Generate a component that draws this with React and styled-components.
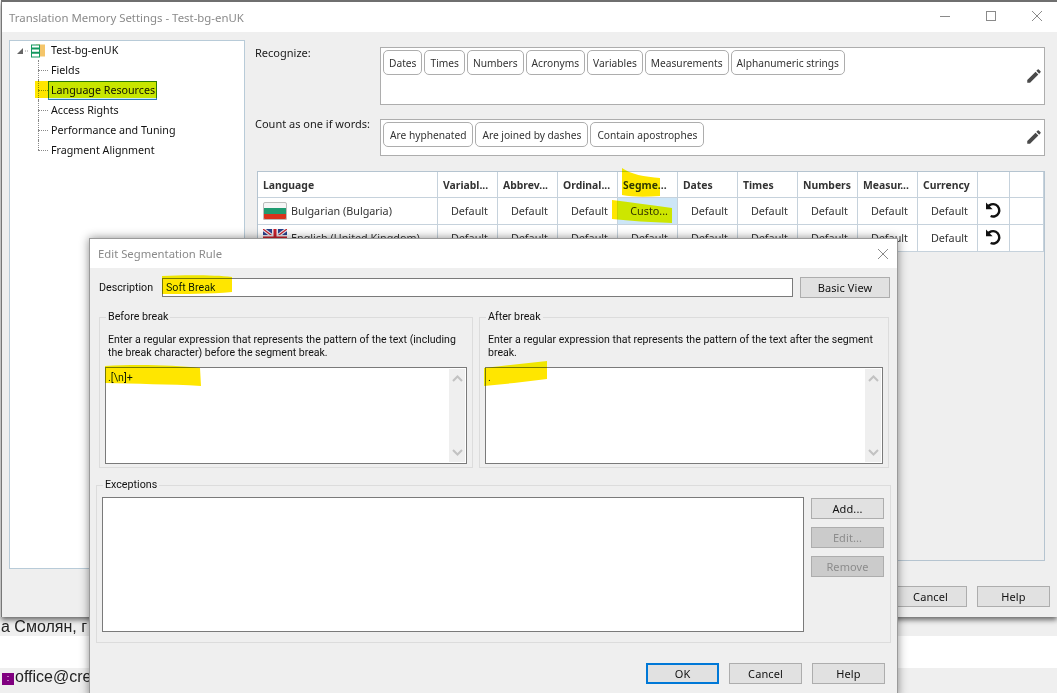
import React from 'react';
import styled, { createGlobalStyle } from 'styled-components';
import { MdEdit } from 'react-icons/md';

const GlobalStyle = createGlobalStyle`
  html, body { margin: 0; padding: 0; background: #fff; }
  body { font-family: "Noto Sans", "Liberation Sans", sans-serif; font-size: 11px; color: #1a1a1a; }
`;

const Page = styled.div`
  position: relative;
  width: 1057px;
  height: 693px;
  overflow: hidden;
  background: #fff;
`;

const Window = styled.div`
  height: 617px;
  box-sizing: border-box;
  margin-left: 1px;
  border-top: 2px solid #6f6f6f;
  border-left: 1px solid #777;
  background: #efefef;
  box-shadow: 0 3px 5px rgba(0, 0, 0, 0.55);
  display: flex;
  flex-direction: column;
  position: relative;
`;

const TitleBar = styled.div`
  height: ${(p) => p.$h}px;
  flex: none;
  background: #fff;
  display: flex;
  align-items: center;
  justify-content: space-between;
  padding-left: ${(p) => p.$pad}px;
  color: #8a8a8a;
  font-family: "Noto Sans", sans-serif;
  font-size: ${(p) => p.$size}px;
`;

const WinControls = styled.div`
  display: flex;
  align-items: center;
  color: #8a8a8a;
`;

const WinControl = styled.svg`
  display: block;
  width: 46px;
  height: 12px;
`;

const WindowBody = styled.div`
  flex: 1;
  display: flex;
  padding: 8px 0 0 7px;
  min-height: 0;
`;

const TreePanel = styled.div`
  width: 234px;
  height: 527px;
  flex: none;
  background: #fff;
  border: 1px solid #b8cbd8;
  position: relative;
`;

const TreeRoot = styled.div`
  height: 19px;
  display: flex;
  align-items: center;
  padding-left: 4px;
  gap: 1px;
`;

const TreeRow = styled.div`
  height: 20px;
  display: flex;
  align-items: center;
  padding-left: 28px;
  position: relative;
  &::before {
    content: '';
    width: 10px;
    border-top: 1px dotted #888;
  }
  &::after {
    content: '';
    position: absolute;
    left: 28px;
    top: 0;
    height: ${(p) => (p.$last ? 10 : 20)}px;
    border-left: 1px dotted #888;
  }
`;

const TreeLabel = styled.span`
  height: 17px;
  line-height: 16px;
  padding: 0 1px 0 2px;
  border: 1px solid ${(p) => (p.$selected ? '#2c7bb5' : 'transparent')};
  background: ${(p) => (p.$selected ? '#c8e8ff' : 'transparent')};
  color: #111;
  font-size: 10.7px;
  white-space: nowrap;
`;

const Settings = styled.div`
  flex: 1;
  min-width: 0;
  padding: 7px 12px 0 10px;
  display: flex;
  flex-direction: column;
`;

const FieldRow = styled.div`
  display: flex;
  height: ${(p) => p.$h}px;
  margin-bottom: ${(p) => p.$gap}px;
`;

const FieldLabel = styled.div`
  width: 125px;
  flex: none;
  line-height: ${(p) => p.$lh}px;
`;

const TagBox = styled.div`
  flex: 1;
  background: #fff;
  border: 1px solid #adadad;
  padding: 2px;
  display: flex;
  align-items: flex-start;
  gap: 2px;
  position: relative;
`;

const Tag = styled.span`
  height: 25px;
  box-sizing: border-box;
  display: flex;
  align-items: center;
  padding: 0 ${(p) => p.$pad}px;
  border: 1px solid #adadad;
  border-radius: 5px;
  background: #fff;
  font-size: 10.2px;
  color: #333;
  white-space: nowrap;
`;

const EditIcon = styled(MdEdit)`
  position: absolute;
  right: 1px;
  bottom: ${(p) => p.$bottom}px;
  width: 18px;
  height: 18px;
  color: #4a4a4a;
`;

const GridFrame = styled.div`
  margin-left: 2px;
  height: 390px;
  box-sizing: border-box;
  border: 1px solid #b5c4d0;
`;

const Grid = styled.div`
  background: #fff;
  display: grid;
  grid-template-columns: 180px repeat(9, 60px) 32px 1fr;
  grid-template-rows: 26px;
  grid-auto-rows: 27px;
  font-size: 10.8px;
`;

const HeaderCell = styled.div`
  box-sizing: border-box;
  display: flex;
  align-items: center;
  padding-left: 5px;
  font-weight: 700;
  font-size: 10.4px;
  color: #333;
  white-space: nowrap;
  overflow: hidden;
  border-right: 1px solid #c6d2dc;
  border-bottom: 1px solid #c6d2dc;
`;

const Cell = styled.div`
  box-sizing: border-box;
  display: flex;
  align-items: center;
  justify-content: flex-end;
  padding: 0 9px 2px 0;
  color: #333;
  border-right: 1px solid #c6d2dc;
  border-bottom: 1px solid #c6d2dc;
  background: ${(p) => (p.$active ? '#cde6f7' : '#fff')};
`;

const LanguageCell = styled(Cell)`
  justify-content: flex-start;
  gap: 4px;
  padding: 0 0 1px 5px;
`;

const IconCell = styled(Cell)`
  justify-content: center;
  padding: 0 2px 2px 0;
`;

const WindowFooter = styled.div`
  position: absolute;
  right: 7px;
  bottom: 10px;
  display: flex;
  gap: 10px;
`;

const Button = styled.button`
  width: ${(p) => p.$w || 73}px;
  height: 21px;
  box-sizing: border-box;
  padding: 0;
  font-family: "Noto Sans", sans-serif;
  font-size: 11px;
  letter-spacing: 0.1px;
  color: ${(p) => (p.disabled ? '#8c8c8c' : '#111')};
  background: ${(p) => (p.disabled ? '#cbcbcb' : '#e1e1e1')};
  border: ${(p) => (p.$primary ? '2px solid #0078d7' : '1px solid #adadad')};
`;

const PageStrip = styled.div`
  height: ${(p) => p.$h}px;
  padding: ${(p) => p.$top}px 0 0 1px;
  box-sizing: border-box;
  background: ${(p) => p.$bg};
  font-family: "Liberation Sans", Arial, sans-serif;
  font-size: 16px;
  line-height: 18px;
  color: #222;
  white-space: nowrap;
`;

const PurpleMark = styled.span`
  display: inline-block;
  width: 12px;
  height: 12px;
  margin: 0 1px 0 1px;
  vertical-align: 1px;
  background: #800080;
  color: #fff;
  font-size: 9px;
  line-height: 11px;
  text-align: center;
`;

const Dialog = styled.div`
  position: absolute;
  left: 89px;
  top: 238px;
  width: 809px;
  height: 460px;
  box-sizing: border-box;
  background: #efefef;
  border: 1px solid #9a9a9a;
  box-shadow: 0 0 9px rgba(0, 0, 0, 0.45);
  display: flex;
  flex-direction: column;
  font-family: Roboto, "Noto Sans", sans-serif;
  font-size: 10.7px;
  color: #111;
`;

const DialogBody = styled.div`
  padding: 9px 7px 0 6px;
  display: flex;
  flex-direction: column;
`;

const DescriptionRow = styled.div`
  display: flex;
  align-items: center;
  margin-left: 3px;
  height: 20px;
`;

const DescriptionLabel = styled.span`
  width: 63px;
  flex: none;
`;

const DescriptionInput = styled.div`
  width: 631px;
  height: 19px;
  box-sizing: border-box;
  flex: none;
  padding-left: 3px;
  line-height: 17px;
  background: #fff;
  border: 1px solid #7a7a7a;
`;

const BasicButton = styled(Button)`
  width: 91px;
  margin-left: 7px;
`;

const BreakColumns = styled.div`
  display: flex;
  gap: 6px;
  margin: 13px 0 0 3px;
`;

const GroupBox = styled.fieldset`
  box-sizing: border-box;
  margin: 0;
  min-width: 0;
  width: ${(p) => p.$w}px;
  height: ${(p) => p.$h}px;
  padding: 0 ${(p) => p.$inset}px;
  border: 1px solid #dcdcdc;
  legend {
    margin-left: 1px;
    padding: 0 2px;
    line-height: 14px;
  }
`;

const Hint = styled.p`
  margin: 9px 0 8px 3px;
  height: 26px;
  line-height: 13px;
  font-size: 10.55px;
`;

const PatternBox = styled.div`
  height: 97px;
  box-sizing: border-box;
  background: #fff;
  border: 1px solid #7a7a7a;
  padding: 3px 2px;
  position: relative;
`;

const ScrollTrack = styled.div`
  position: absolute;
  top: 1px;
  right: 1px;
  bottom: 1px;
  width: 16px;
  background: #efefef;
  display: flex;
  flex-direction: column;
  justify-content: space-between;
  align-items: center;
  padding: 6px 0;
  box-sizing: border-box;
`;

const Chevron = styled.svg`
  width: 11px;
  height: 7px;
  fill: none;
  stroke: #c2c2c2;
  stroke-width: 2;
`;

const ExceptionsBox = styled(GroupBox)`
  margin-top: 10px;
  legend { margin-left: 1px; }
`;

const ExceptionsRow = styled.div`
  display: flex;
  gap: 7px;
  margin-top: 5px;
`;

const ExceptionsList = styled.div`
  width: 702px;
  height: 135px;
  box-sizing: border-box;
  flex: none;
  background: #fff;
  border: 1px solid #7a7a7a;
`;

const SideButtons = styled.div`
  display: flex;
  flex-direction: column;
  gap: 8px;
  padding-top: 1px;
`;

const DialogFooter = styled.div`
  display: flex;
  justify-content: flex-end;
  gap: 10px;
  margin: 20px 5px 0 0;
`;

const Marks = styled.svg`
  position: absolute;
  left: 0;
  top: 0;
  width: 1057px;
  height: 693px;
  pointer-events: none;
  mix-blend-mode: darken;
  fill: #ffe600;
`;

const BulgarianFlag = () => (
  <svg width="24" height="18" viewBox="0 0 24 18">
    <rect x="0.5" y="0.5" width="23" height="6" fill="#f6f6f6" />
    <rect x="0.5" y="6" width="23" height="6" fill="#1f9b70" />
    <rect x="0.5" y="12" width="23" height="5.5" fill="#d8321c" />
    <rect x="0.5" y="0.5" width="23" height="17" rx="1.5" fill="none" stroke="#bdbdbd" />
  </svg>
);

const UkFlag = () => (
  <svg width="24" height="18" viewBox="0 0 24 18">
    <rect width="24" height="18" rx="1" fill="#27408b" />
    <path d="M0 0L24 18M24 0L0 18" stroke="#e8e8f0" strokeWidth="3.4" />
    <path d="M0 0L24 18M24 0L0 18" stroke="#c8202c" strokeWidth="1.2" />
    <path d="M12 0V18M0 9H24" stroke="#e8e8f0" strokeWidth="6" />
    <path d="M12 0V18M0 9H24" stroke="#c8202c" strokeWidth="3" />
  </svg>
);

const ResetIcon = () => (
  <svg width="18" height="18" viewBox="0 0 18 18" fill="none">
    <path d="M3.6 6.4A6.2 6.2 0 1 1 6.6 15" stroke="#111" strokeWidth="2.4" />
    <path d="M2 1.6V8.2H8.6Z" fill="#111" />
  </svg>
);

const MemoryIcon = () => (
  <svg width="16" height="14" viewBox="0 0 16 14">
    <rect x="5" y="0.5" width="9" height="12" fill="#f4c56a" />
    <rect x="0.5" y="1" width="8" height="12" fill="#fff" stroke="#14985f" />
    <path d="M1 4.5H8M1 8.8H8" stroke="#14985f" strokeWidth="2" />
  </svg>
);

const ScrollBar = () => (
  <ScrollTrack>
    <Chevron viewBox="0 0 11 7"><path d="M1 6L5.5 1.5L10 6" /></Chevron>
    <Chevron viewBox="0 0 11 7"><path d="M1 1L5.5 5.5L10 1" /></Chevron>
  </ScrollTrack>
);

const treeItems = ['Fields', 'Language Resources', 'Access Rights', 'Performance and Tuning', 'Fragment Alignment'];
const recognizeTags = ['Dates', 'Times', 'Numbers', 'Acronyms', 'Variables', 'Measurements', 'Alphanumeric strings'];
const wordTags = ['Are hyphenated', 'Are joined by dashes', 'Contain apostrophes'];
const columns = ['Variabl...', 'Abbrev...', 'Ordinal...', 'Segme...', 'Dates', 'Times', 'Numbers', 'Measur...', 'Currency'];
const languages = [
  { name: 'Bulgarian (Bulgaria)', Flag: BulgarianFlag, custom: 3 },
  { name: 'English (United Kingdom)', Flag: UkFlag, custom: -1 },
];

export default function App() {
  return (
    <Page>
      <GlobalStyle />
      <Window>
        <TitleBar $h={30} $pad={7} $size={11.4}>
          Translation Memory Settings - Test-bg-enUK
          <WinControls>
            <WinControl viewBox="0 0 46 12"><path d="M21 5.5H31" stroke="currentColor" /></WinControl>
            <WinControl viewBox="0 0 46 12"><rect x="21.5" y="0.5" width="9" height="9" fill="none" stroke="currentColor" /></WinControl>
            <WinControl viewBox="0 0 46 12"><path d="M21 0L31 10M31 0L21 10" stroke="currentColor" fill="none" /></WinControl>
          </WinControls>
        </TitleBar>
        <WindowBody>
          <TreePanel>
            <TreeRoot>
              <svg width="16" height="14" viewBox="0 0 16 14"><path d="M3 10H9V4Z" fill="#666" /><path d="M11 7H15" stroke="#999" strokeDasharray="1 1" /></svg>
              <MemoryIcon />
              <TreeLabel>Test-bg-enUK</TreeLabel>
            </TreeRoot>
            {treeItems.map((item, i) => (
              <TreeRow key={item} $last={i === treeItems.length - 1}>
                <TreeLabel $selected={item === 'Language Resources'}>{item}</TreeLabel>
              </TreeRow>
            ))}
          </TreePanel>
          <Settings>
            <FieldRow $h={58} $gap={14}>
              <FieldLabel $lh={11}>Recognize:</FieldLabel>
              <TagBox>
                {recognizeTags.map((t) => <Tag key={t} $pad={5}>{t}</Tag>)}
                <EditIcon $bottom={19} />
              </TagBox>
            </FieldRow>
            <FieldRow $h={37} $gap={15}>
              <FieldLabel $lh={9}>Count as one if words:</FieldLabel>
              <TagBox>
                {wordTags.map((t) => <Tag key={t} $pad={6}>{t}</Tag>)}
                <EditIcon $bottom={9} />
              </TagBox>
            </FieldRow>
            <GridFrame>
              <Grid>
                <HeaderCell>Language</HeaderCell>
                {columns.map((c) => <HeaderCell key={c}>{c}</HeaderCell>)}
                <HeaderCell />
                <HeaderCell />
                {languages.map(({ name, Flag, custom }) => (
                  <React.Fragment key={name}>
                    <LanguageCell><Flag />{name}</LanguageCell>
                    {columns.map((c, i) => (
                      <Cell key={c} $active={i === custom}>{i === custom ? 'Custo...' : 'Default'}</Cell>
                    ))}
                    <IconCell><ResetIcon /></IconCell>
                    <Cell />
                  </React.Fragment>
                ))}
              </Grid>
            </GridFrame>
          </Settings>
        </WindowBody>
        <WindowFooter>
          <Button>Cancel</Button>
          <Button>Help</Button>
        </WindowFooter>
      </Window>
      <PageStrip $h={19} $top={1} $bg="#efefef">а Смолян, г</PageStrip>
      <PageStrip $h={32} $top={0} $bg="#fff" />
      <PageStrip $h={25} $top={0} $bg="#efefef"><PurpleMark>:</PurpleMark>office@cre</PageStrip>

      <Dialog>
        <TitleBar $h={29} $pad={8} $size={11.3}>
          Edit Segmentation Rule
          <WinControls>
            <WinControl viewBox="0 0 46 12"><path d="M27 1L37 11M37 1L27 11" stroke="currentColor" fill="none" /></WinControl>
          </WinControls>
        </TitleBar>
        <DialogBody>
          <DescriptionRow>
            <DescriptionLabel>Description</DescriptionLabel>
            <DescriptionInput>Soft Break</DescriptionInput>
            <BasicButton>Basic View</BasicButton>
          </DescriptionRow>
          <BreakColumns>
            <GroupBox $w={374} $h={158} $inset={5}>
              <legend>Before break</legend>
              <Hint>Enter a regular expression that represents the pattern of the text (including the break character) before the segment break.</Hint>
              <PatternBox>.[\n]+<ScrollBar /></PatternBox>
            </GroupBox>
            <GroupBox $w={410} $h={158} $inset={5}>
              <legend>After break</legend>
              <Hint>Enter a regular expression that represents the pattern of the text after the segment break.</Hint>
              <PatternBox>.<ScrollBar /></PatternBox>
            </GroupBox>
          </BreakColumns>
          <ExceptionsBox $w={795} $h={165} $inset={5}>
            <legend>Exceptions</legend>
            <ExceptionsRow>
              <ExceptionsList />
              <SideButtons>
                <Button>Add...</Button>
                <Button disabled>Edit...</Button>
                <Button disabled>Remove</Button>
              </SideButtons>
            </ExceptionsRow>
          </ExceptionsBox>
          <DialogFooter>
            <Button $primary>OK</Button>
            <Button>Cancel</Button>
            <Button>Help</Button>
          </DialogFooter>
        </DialogBody>
      </Dialog>

      <Marks viewBox="0 0 1057 693">
        <path d="M35 81H157V98H35Z" />
        <path d="M622 168C630 174 645 177 660 178L660 196C645 197 632 197 622 195Z" />
        <path d="M612 200C630 202 650 205 672 208L672 223C650 222 630 221 612 219Z" />
        <path d="M162 276C185 275 215 275 232 277L232 292C210 294 185 294 162 294Z" />
        <path d="M105 366C135 364 175 365 200 368L201 386C170 384 135 384 105 383Z" />
        <path d="M484 368L547 361V379L514 383L484 386Z" />
      </Marks>
    </Page>
  );
}
